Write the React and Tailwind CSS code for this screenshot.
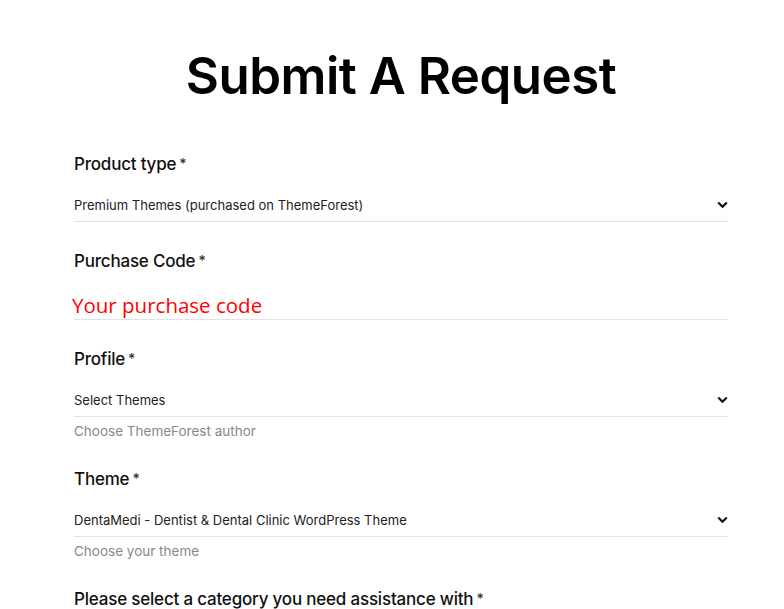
export default function App() {
  const font = { fontFamily: '"Inter", "Noto Sans", sans-serif' };

  function Chevron() {
    return (
      <svg width="11" height="8" viewBox="0 0 11 8" className="shrink-0">
        <path d="M1.2 1.5 L5.5 5.8 L9.8 1.5" fill="none" stroke="#111" strokeWidth="2.2" />
      </svg>
    );
  }

  function Label({ children }) {
    return (
      <div className="h-[24px] text-[17px] leading-[24px] font-medium text-[#111] tracking-[-0.2px]">
        {children}
        <span className="ml-[3px] text-[14px] align-top text-[#333]">*</span>
      </div>
    );
  }

  function Select({ value, help }) {
    return (
      <div>
        <div className="mt-[21px] flex items-center justify-between h-[16px]">
          <span className="text-[13px] leading-[16px] text-[#222]">{value}</span>
          <Chevron />
        </div>
        <div className="pt-[8px] border-b border-[#e2e2e2]" />
        {help && <div className="text-[13.5px] leading-[16px] text-[#888] mt-[6px]">{help}</div>}
      </div>
    );
  }

  return (
    <div className="bg-white min-h-screen w-full" style={font}>
      <div className="ml-[74px] w-[654px] pt-[42px]">
        <h1 className="text-center text-[51px] leading-[68px] font-semibold text-black tracking-[-0.5px]">
          Submit A Request
        </h1>
        <div className="mt-[42px] flex flex-col">
          <Label>Product type</Label>
          <Select value="Premium Themes (purchased on ThemeForest)" />

          <div className="mt-[27px]">
            <Label>Purchase Code</Label>
          </div>
          <div className="mt-[18px] h-[28px] flex items-center">
            <span
              className="text-[20.5px] leading-[28px] text-[#ff0000] -ml-[2px]"
              style={{ fontFamily: '"Open Sans", sans-serif' }}
            >
              Your purchase code
            </span>
          </div>
          <div className="border-b border-[#e2e2e2]" />

          <div className="mt-[27px]">
            <Label>Profile</Label>
          </div>
          <Select value="Select Themes" help="Choose ThemeForest author" />

          <div className="mt-[28px]">
            <Label>Theme</Label>
          </div>
          <Select value="DentaMedi - Dentist & Dental Clinic WordPress Theme" help="Choose your theme" />

          <div className="mt-[28px]">
            <Label>Please select a category you need assistance with</Label>
          </div>
        </div>
      </div>
    </div>
  );
}
